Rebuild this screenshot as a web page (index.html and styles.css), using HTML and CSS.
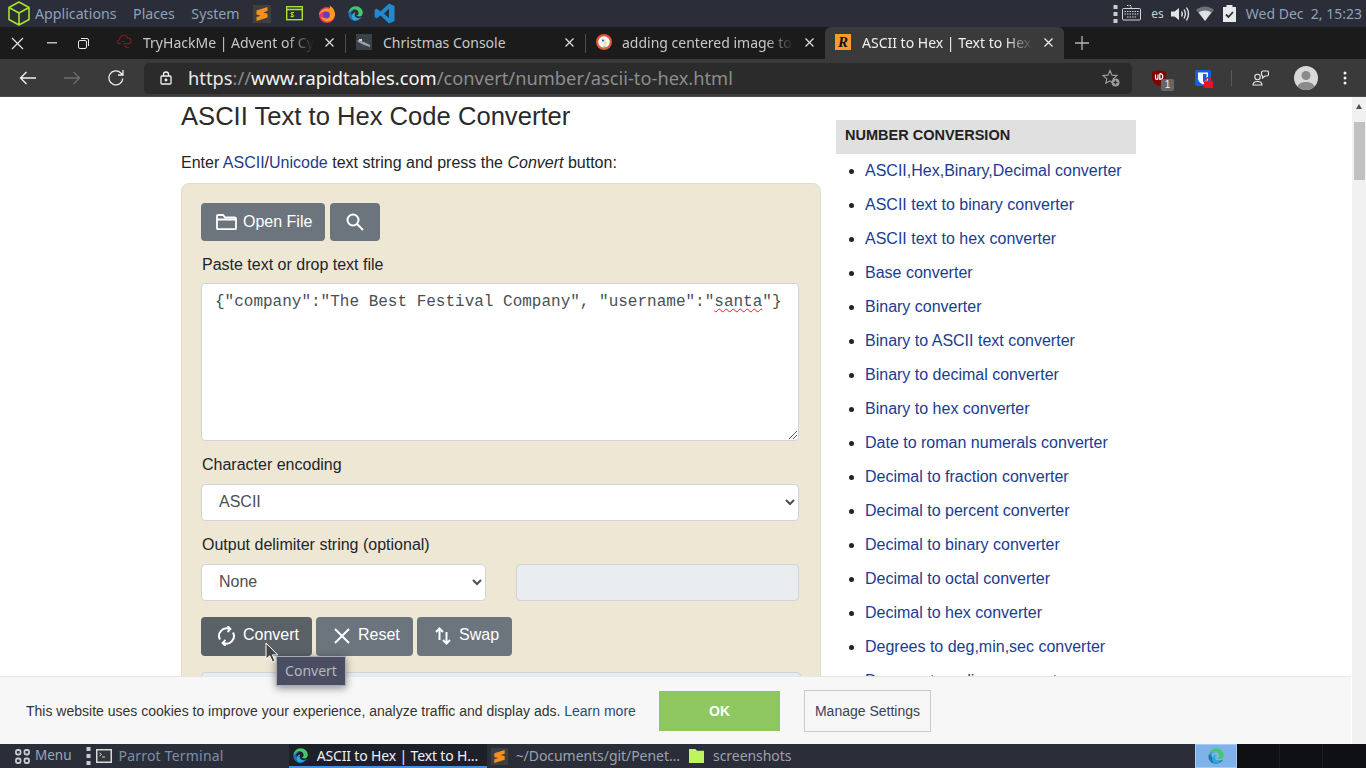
FILE: index.html
```html
<!DOCTYPE html>
<html lang="en">
<head>
<meta charset="utf-8">
<title>ASCII to Hex | Text to Hex Code Converter</title>
<link rel="stylesheet" href="styles.css">
</head>
<body>
<svg class="defs" width="0" height="0">
  <defs>
    <symbol id="edge" viewBox="0 0 24 24">
      <path fill="#1f6fb8" d="M21.5 16.500c-2.600 3.800-6 5.900-9.800 5.900C7.200 22.400 3.200 19 2 14.500c-.5-4 1.800-7.600 5-8.800C5.500 8 5.500 11 6.500 13.300c1.800 4 7 6.200 11.500 4.600 1.300-.4 2.400-.9 3.500-1.400z"/>
      <path fill="#27a9d8" d="M9.500 21.800C7 19.800 6 16.700 7.300 13.700c1-2.300 3-3.500 5-3.500-1 1-1.700 2.500-1.400 4.400.5 3 3.600 4.700 7.200 3.800-1.500 2.300-5.100 4.100-8.600 3.400z"/>
      <path fill="#43c96b" d="M2 12C2.400 6.200 6.700 1.800 12.300 1.800c5.700 0 10 4.300 10 9.500 0 2.800-2.100 4.800-5 4.800-1.800 0-3.300-.6-3.800-1.500 1.800-.2 2.900-1.400 2.900-3 0-3.100-2.800-5.500-6-5.500C6.800 6.600 3.500 8.600 2 12z"/>
      <path fill="#2aa4d6" d="M2 12c1.500-3.400 4.800-5.400 8.400-5.400 1.400 0 2.600.4 3.700 1.100C11 6.400 7.500 7.300 6.300 9.700 4.800 9.800 3.200 10.700 2 12z"/>
    </symbol>
    <symbol id="sublime" viewBox="0 0 18 18">
      <rect width="18" height="18" fill="#3f3f3f"/>
      <path fill="#f58f1e" d="M14.500 2v4L10.300 7.400 14.500 8.700v3.800L3.500 16v-4l4.200-1.300L3.500 9.500V5.500z"/>
    </symbol>
  </defs>
</svg>

<header class="topbar">
  <div class="menu-group">
    <svg class="cube" width="22" height="25" viewBox="0 0 22 25" fill="none" stroke="#a6e22e" stroke-width="1.600" stroke-linejoin="round"><path d="M11 1l10 5.500v12L11 24 1 18.500v-12zM1 6.500L11 12l10-5.500M11 12v12"/></svg>
    <span class="menu-item first">Applications</span>
    <span class="menu-item">Places</span>
    <span class="menu-item">System</span>
    <svg class="launcher l1" width="18" height="18"><use href="#sublime"/></svg>
    <svg class="launcher l2" width="17" height="15" viewBox="0 0 17 15" fill="none"><rect x=".7" y=".7" width="15.600" height="13" stroke="#a6e22e" stroke-width="1.400"/><path d="M1 3.500h15" stroke="#a6e22e" stroke-width="1.600"/><path d="M6 6v5.500M4.500 10.500h3q.6-1-.4-1.700l-1.800-.7q-.8-.8.200-1.600h2.500" stroke="#a6e22e"/></svg>
    <svg class="launcher l3" width="18" height="18" viewBox="0 0 18 18"><circle cx="9" cy="10" r="8" fill="#e6336b"/><path fill="#ff9a1f" d="M17 9.500C17 5 14.500 2 11.500.5c1.200 2 .6 3-.5 3.500C8 3 5 4 4 5.500 2 6 1.200 8 1 10c2-3 5-4 7-3.500 3 .8 3.500 3.500 2 5.500-1.500 1.500-5 1.500-7-.5 1 3.500 4 5 6.500 5 4 0 7.500-3.500 7.500-7.500z"/><circle cx="8.500" cy="10" r="3.400" fill="#6a3bc4"/></svg>
    <svg class="launcher l4" width="17" height="17"><use href="#edge"/></svg>
    <svg class="launcher l5" width="21" height="21" viewBox="0 0 21 21"><path fill="#1f8ad2" d="M15 .5l5.500 2.600v14.800L15 20.500 6.500 12.400 2.800 15.300.6 14.200V6.800l2.200-1.100 3.700 2.900zM15 5.700L10 10.500l5 4.800z"/></svg>
  </div>
  <div class="tray">
    <svg class="tray-dots" width="5" height="20" viewBox="0 0 5 20" fill="#c9ccd2"><rect width="4" height="4" x=".5" y="1"/><rect width="4" height="4" x=".5" y="8"/><rect width="4" height="4" x=".5" y="15"/></svg>
    <svg class="tray-kbd" width="19" height="18" viewBox="0 0 19 18" fill="none" stroke="#d3d5d9"><rect x=".5" y="5.500" width="18" height="11.500" rx="1"/><path d="M9 5V2.500H5M2.500 8.500h14M2.500 11h14M5 14h9" stroke-dasharray="1.500 1"/></svg>
    <span class="tray-lang">es</span>
    <svg class="tray-icon sound" width="20" height="16" viewBox="0 0 20 16" fill="none" stroke="#e3e4e7" stroke-width="1.400"><path fill="#e3e4e7" stroke="none" d="M0 5.500h3.500L8 2v12l-4.500-3.500H0z"/><path d="M10.500 5.500q1.500 2.500 0 5M13 3.500q2.700 4.500 0 9M15.500 1.500q4 6.500 0 13"/></svg>
    <svg class="tray-icon wifi" width="18" height="15" viewBox="0 0 18 15"><path fill="#6d7078" d="M0 4C5-.8 13-.8 18 4L9 15z"/><path fill="#dfe0e3" d="M2.700 6.500c3.700-2.800 9-2.800 12.600 0L9 15z"/></svg>
    <svg class="tray-icon clip" width="13" height="17" viewBox="0 0 13 17"><path fill="#e8e9eb" d="M0 2h3.500V0h6v2H13v17H0z"/><path fill="none" stroke="#2b2e38" stroke-width="1.800" d="M3 9.500l2.500 2.500L10 7"/></svg>
    <span class="clock">Wed Dec&nbsp; 2, 15:23</span>
  </div>
</header>

<nav class="tabstrip">
  <div class="winctl">
    <svg width="13" height="13" viewBox="0 0 13 13" stroke="#e6e6e6" stroke-width="1.200"><path d="M1 1l11 11M12 1L1 12"/></svg>
    <svg class="wc-min" width="10" height="2" viewBox="0 0 10 2"><rect width="10" height="1.500" fill="#bdbdbd"/></svg>
    <svg class="wc-max" width="11" height="11" viewBox="0 0 11 11" fill="none" stroke="#e6e6e6"><rect x=".5" y="2.500" width="8" height="8" rx="1.500"/><path d="M3 .5h6q1.500 0 1.500 1.500v6"/></svg>
  </div>
  <div class="tab tab-first">
    <svg class="fav" width="16" height="16" viewBox="0 0 17 17" fill="none" stroke="#8e1a1e" stroke-width="1.100"><path d="M4 10.500H2.500a2.300 2.300 0 0 1 0-4.500C3 3 5 1.500 7.500 1.500S11 3 11.500 4.500c1.500-.3 3.500.8 3.500 2.800s-1.300 3-3 3H6.500M8 13l3 1.500 2 0M5 8h3"/></svg>
    <span class="tab-title">TryHackMe | Advent of Cy</span>
    <svg class="tab-x" width="9" height="9" viewBox="0 0 9 9" stroke="#e0e0e0" stroke-width="1.200"><path d="M.5.500l8 8M8.500.500l-8 8"/></svg>
  </div>
  <div class="tab sep tab-wide-gap">
    <svg class="fav" width="16" height="16" viewBox="0 0 16 16"><rect width="16" height="16" fill="#3b4148"/><path d="M1 6l7 2 6 3v2L8 11 2 8z" fill="#9aa0a6"/><rect x="3" y="5" width="3" height="2" fill="#d0d0d0"/></svg>
    <span class="tab-title">Christmas Console</span>
    <svg class="tab-x" width="9" height="9" viewBox="0 0 9 9" stroke="#e0e0e0" stroke-width="1.200"><path d="M.5.500l8 8M8.500.500l-8 8"/></svg>
  </div>
  <div class="tab sep">
    <svg class="fav" width="16" height="16" viewBox="0 0 16 16"><circle cx="8" cy="8" r="8" fill="#de5833"/><circle cx="8" cy="8" r="5.800" fill="#fff"/><path d="M5 4q3-2 5 1 1 4 .5 8h-3Q5 9 5 4z" fill="#e9e9e9"/><circle cx="7" cy="6.500" r="1" fill="#2d4f8e"/><path d="M8 9l3-.8v1.600z" fill="#fdd20a"/><path d="M7.500 12.500l3 .2-1 1.800h-2z" fill="#65bc46"/></svg>
    <span class="tab-title">adding centered image to</span>
    <svg class="tab-x" width="9" height="9" viewBox="0 0 9 9" stroke="#e0e0e0" stroke-width="1.200"><path d="M.5.500l8 8M8.500.500l-8 8"/></svg>
  </div>
  <div class="tab active">
    <span class="fav r-fav">R</span>
    <span class="tab-title">ASCII to Hex | Text to Hex</span>
    <svg class="tab-x" width="9" height="9" viewBox="0 0 9 9" stroke="#f0f0f0" stroke-width="1.200"><path d="M.5.500l8 8M8.500.500l-8 8"/></svg>
  </div>
  <svg class="newtab" width="14" height="14" viewBox="0 0 14 14" stroke="#b5b5b5" stroke-width="1.300"><path d="M7 0v14M0 7h14"/></svg>
</nav>

<div class="toolbar">
  <div class="navbtns">
    <svg width="18" height="14" viewBox="0 0 18 14" fill="none" stroke="#f2f2f2" stroke-width="1.300"><path d="M17 7H1.500M7.500 1l-6 6 6 6"/></svg>
    <svg width="18" height="14" viewBox="0 0 18 14" fill="none" stroke="#6d6d6d" stroke-width="1.300"><path d="M1 7h15.500M10.500 1l6 6-6 6"/></svg>
    <svg width="18" height="18" viewBox="0 0 18 18" fill="none" stroke="#eeeeee" stroke-width="1.300"><path d="M15.800 9.500a7 7 0 1 1-2-5.500l2 2M16 1v5h-5"/></svg>
  </div>
  <div class="omnibox">
    <svg class="lock" width="12" height="14" viewBox="0 0 12 14" fill="none" stroke="#f2f2f2" stroke-width="1.300"><rect x="1" y="5" width="10" height="8" rx="1"/><path d="M3.500 5V3.500a2.500 2.500 0 0 1 5 0V5"/><circle cx="6" cy="9" r=".8" fill="#f2f2f2"/></svg>
    <span class="url"><span class="u-main">https</span><span class="u-dim">://</span><span class="u-host">www.rapidtables.com</span><span class="u-dim">/convert/number/ascii-to-hex.html</span></span>
    <svg class="star" width="18" height="18" viewBox="0 0 18 18" fill="none" stroke="#9b9b9b" stroke-width="1.200"><path d="M8 1.500l2 4.700 5 .4-3.800 3.300 1 4.300L8 12l-4.200 2.200 1-4.300L1 6.600l5-.4z"/><circle cx="13.500" cy="13.500" r="4" fill="#9b9b9b" stroke="none"/><path d="M13.500 11.500v4M11.500 13.500h4" stroke="#2b2b2b"/></svg>
  </div>
  <div class="ext">
    <span class="ubo">
      <svg width="14" height="16" viewBox="0 0 14 16"><path fill="#800000" d="M0 2l7-2 7 2v6q0 5-7 8-7-3-7-8z"/><path fill="none" stroke="#fff" stroke-width="1.200" d="M3.500 4.500v3.500q0 1.300 1.300 1.300T6 8V4.500M7.800 3.500v6q3-.2 3-3t-3-3"/></svg>
      <span class="ubo-badge">1</span>
    </span>
    <span class="bw">
      <svg width="16" height="16" viewBox="0 0 16 16"><rect width="16" height="16" rx="1.500" fill="#175ddc"/><path fill="#fff" d="M3 2.500h10v6q0 3.500-5 6-5-2.500-5-6z"/><path fill="#175ddc" d="M8 4v8.500q3.500-1.800 3.500-4.500V4z"/></svg>
      <svg class="bw-lock" width="9" height="11" viewBox="0 0 9 11"><path fill="none" stroke="#e8131d" stroke-width="1.300" d="M2 5V3a2.500 2.500 0 0 1 5 0v2"/><rect y="4.500" width="9" height="6.500" rx=".5" fill="#e8131d"/></svg>
    </span>
    <span class="vsep"></span>
    <svg class="people" width="17" height="16" viewBox="0 0 17 16" fill="none" stroke="#e8e8e8" stroke-width="1.100"><circle cx="5.500" cy="7" r="2.700"/><path d="M1 15c0-2.500 2-3.500 4.500-3.500S10 12.500 10 15z"/><path d="M9.500 2.500Q9.500 1 11 1h4q1.500 0 1.500 1.500v2Q16.500 6 15 6h-2l-2.500 2V5.800q-1-.2-1-1.500z"/></svg>
    <svg class="avatar" width="24" height="24" viewBox="0 0 24 24"><circle cx="12" cy="12" r="12" fill="#d9d9d9"/><circle cx="12" cy="9.500" r="4.500" fill="#8a8a8a"/><path d="M3.500 20.500c1.500-3.500 5-4.500 8.500-4.500s7 1 8.500 4.500A12 12 0 0 1 12 24a12 12 0 0 1-8.500-3.500z" fill="#8a8a8a"/></svg>
    <svg class="kebab" width="4" height="14" viewBox="0 0 4 14" fill="#f0f0f0"><circle cx="2" cy="2" r="1.500"/><circle cx="2" cy="7" r="1.500"/><circle cx="2" cy="12" r="1.500"/></svg>
  </div>
</div>

<div class="viewport">
  <main class="page">
    <section class="content">
      <h1 class="title">ASCII Text to Hex Code Converter</h1>
      <p class="intro">Enter <a href="#">ASCII</a>/<a href="#">Unicode</a> text string and press the <em>Convert</em> button:</p>
      <form class="card">
        <div class="btnrow top">
          <button type="button" class="btn">
            <svg class="ico" width="21" height="16" viewBox="0 0 21 16" fill="none" stroke="#fff" stroke-width="1.800"><path d="M1 14.200V2q0-1 1-1h5l2 2.300h9.500q1.500 0 1.500 1.200v9.700q0 1-1 1H2q-1 0-1-1zM1 5.500h19"/></svg>Open File
          </button>
          <button type="button" class="btn icon-only" aria-label="Search">
            <svg width="18" height="18" viewBox="0 0 18 18" fill="none" stroke="#fff" stroke-width="2"><circle cx="7" cy="7" r="5.500"/><path d="M11 11l6 6"/></svg>
          </button>
        </div>
        <label class="lbl first-lbl">Paste text or drop text file</label>
        <div class="ta-box">{"company":"The Best Festival Company", "username":"<span class="spell">santa</span>"}<svg class="grip" width="8" height="8" viewBox="0 0 8 8" stroke="#555"><path d="M0 8l8-8M4 8l4-4"/></svg></div>
        <label class="lbl">Character encoding</label>
        <select class="sel wide"><option>ASCII</option></select>
        <label class="lbl">Output delimiter string (optional)</label>
        <div class="delim">
          <select class="sel half"><option>None</option></select>
          <input class="disabled-input" type="text" disabled aria-label="Delimiter">
        </div>
        <div class="btnrow actions">
          <button type="button" class="btn hover convert">
            <svg class="ico" width="19" height="20" viewBox="0 0 19 20" fill="none" stroke="#fff" stroke-width="2"><path d="M3 13.500A7.500 7.500 0 0 1 12.500 3M16 6.500A7.500 7.500 0 0 1 6.500 17"/><path d="M10.500 0l3 3-3 3M8.500 20l-3-3 3-3" stroke-width="1.800"/></svg>Convert
            <span class="tooltip">Convert</span>
            <svg class="cursor" width="14" height="22" viewBox="0 0 14 22"><path d="M1 1v16l3.800-3.200 2.700 6.400 2.600-1.100-2.700-6.200 5.300 0z" fill="#454545" stroke="#fff"/></svg>
          </button>
          <button type="button" class="btn reset">
            <svg class="ico" width="16" height="16" viewBox="0 0 16 16" stroke="#fff" stroke-width="2"><path d="M1 1l14 14M15 1L1 15"/></svg>Reset
          </button>
          <button type="button" class="btn swap">
            <svg class="ico" width="16" height="18" viewBox="0 0 16 18" fill="none" stroke="#fff" stroke-width="2"><path d="M4.500 13V2M1 5l3.500-3.500L8 5M11.500 5v11.500M8 13l3.500 3.500L15 13"/></svg>Swap
          </button>
        </div>
        <div class="output"></div>
      </form>
    </section>
    <aside class="side">
      <h2 class="side-head">NUMBER CONVERSION</h2>
      <ul class="side-list">
        <li><a href="#">ASCII,Hex,Binary,Decimal converter</a></li>
        <li><a href="#">ASCII text to binary converter</a></li>
        <li><a href="#">ASCII text to hex converter</a></li>
        <li><a href="#">Base converter</a></li>
        <li><a href="#">Binary converter</a></li>
        <li><a href="#">Binary to ASCII text converter</a></li>
        <li><a href="#">Binary to decimal converter</a></li>
        <li><a href="#">Binary to hex converter</a></li>
        <li><a href="#">Date to roman numerals converter</a></li>
        <li><a href="#">Decimal to fraction converter</a></li>
        <li><a href="#">Decimal to percent converter</a></li>
        <li><a href="#">Decimal to binary converter</a></li>
        <li><a href="#">Decimal to octal converter</a></li>
        <li><a href="#">Decimal to hex converter</a></li>
        <li><a href="#">Degrees to deg,min,sec converter</a></li>
        <li><a href="#">Degrees to radians converter</a></li>
      </ul>
    </aside>
  </main>
  <div class="scrollbar">
    <span class="sb-up"></span>
    <span class="sb-thumb"></span>
  </div>
  <div class="cookie">
    <p class="cookie-text">This website uses cookies to improve your experience, analyze traffic and display ads. <a href="#">Learn more</a></p>
    <button type="button" class="ok">OK</button>
    <button type="button" class="manage">Manage Settings</button>
  </div>
</div>

<footer class="taskbar">
  <span class="task menu-btn">
    <svg width="15" height="15" viewBox="0 0 15 15" fill="none" stroke="#c9ccd2" stroke-width="1.800"><rect x="1" y="1" width="4.500" height="4.500" rx="1.500"/><rect x="9.500" y="1" width="4.500" height="4.500" rx="1.500"/><rect x="1" y="9.500" width="4.500" height="4.500" rx="1.500"/><rect x="9.500" y="9.500" width="4.500" height="4.500" rx="1.500"/></svg>
    <span class="menu-label">Menu</span>
  </span>
  <svg class="task-dots" width="5" height="20" viewBox="0 0 5 20" fill="#c9ccd2"><rect width="4" height="4" x=".5" y="1"/><rect width="4" height="4" x=".5" y="8"/><rect width="4" height="4" x=".5" y="15"/></svg>
  <span class="task term">
    <svg width="16" height="14" viewBox="0 0 16 14"><rect width="16" height="14" fill="#d8d8d8"/><rect x="1.500" y="1.500" width="13" height="11" fill="#33363c"/><path d="M3.500 4l2 1.500-2 1.500M6 8h3" stroke="#d8d8d8" fill="none"/></svg>
    <span class="dim-label wide-label">Parrot Terminal</span>
  </span>
  <span class="task current">
    <svg width="17" height="17"><use href="#edge"/></svg>
    <span class="current-label">ASCII to Hex | Text to H...</span>
  </span>
  <span class="task subl">
    <svg width="17" height="17"><use href="#sublime"/></svg>
    <span class="dim-label narrow">~/Documents/git/Penet...</span>
  </span>
  <span class="task shots">
    <svg width="15" height="14" viewBox="0 0 14 13"><path fill="#bdf45f" d="M0 0h6l1.500 1.500H14V13H0z"/></svg>
    <span class="dim-label narrow">screenshots</span>
  </span>
  <span class="pager">
    <span class="pager-on"><svg width="18" height="18"><use href="#edge"/></svg></span>
    <span class="pager-off"></span>
    <span class="pager-off"></span>
    <span class="pager-off last"></span>
  </span>
</footer>
</body>
</html>
```
FILE: styles.css
```css
* { box-sizing: border-box; }
html, body { margin: 0; padding: 0; height: 768px; overflow: hidden; }
body { display: flex; flex-direction: column; width: 1366px; font-family: "Liberation Sans", Arial, sans-serif; background: #fff; }
.defs { position: absolute; }

/* desktop top panel */
.topbar { height: 27px; flex: none; display: flex; justify-content: space-between; align-items: center; background: #2b2e38; font: 14.200px "Noto Sans", sans-serif; color: #8ea2ba; }
.menu-group { display: flex; align-items: center; }
.cube { margin-left: 8px; }
.menu-item { margin-left: 16.500px; white-space: nowrap; }
.menu-item.first { margin-left: 5px; }
.launcher { flex: none; }
.l1 { margin-left: 13px; }
.l2 { margin-left: 15px; }
.l3 { margin-left: 15px; }
.l4 { margin-left: 11px; }
.l5 { margin-left: 10px; }
.tray { display: flex; align-items: center; padding-right: 4px; }
.tray-kbd { margin-left: 4px; margin-top: -3px; }
.tray-lang { margin-left: 10px; color: #c9ccd2; font-size: 12px; }
.sound { margin-left: 7px; }
.wifi { margin-left: 5px; }
.clip { margin-left: 9px; }
.clock { margin-left: 10px; white-space: nowrap; font-size: 14px; }

/* browser tab strip */
.tabstrip { height: 32px; flex: none; display: flex; align-items: center; background: #1b1b1b; font: 14px "Noto Sans", sans-serif; color: #c8c8c8; }
.winctl { width: 105px; flex: none; display: flex; align-items: center; padding-left: 11px; }
.wc-min { margin-left: 23px; }
.wc-max { margin-left: 21px; }
.tab { position: relative; width: 240px; height: 32px; flex: none; display: flex; align-items: center; padding: 0 11px 2px 11px; }
.tab-first { padding-left: 12px; }
.tab.sep::before { content: ""; position: absolute; left: 0; top: 7px; height: 19px; width: 1px; background: #4f4f4f; }
.tab.active { background: #3a3a3a; color: #f0f0f0; border-radius: 6px 6px 0 0; width: 239px; padding-left: 10px; }
.fav { flex: none; }
.r-fav { width: 16px; height: 16px; background: #f89b2c; color: #111; font: italic bold 15px/16px "Liberation Serif", serif; text-align: center; }
.tab-title { flex: 1; min-width: 0; margin: 0 11px 0 10px; overflow: hidden; white-space: nowrap; -webkit-mask-image: linear-gradient(to right, #000 84%, transparent 100%); mask-image: linear-gradient(to right, #000 84%, transparent 100%); }
.tab-wide-gap .tab-title, .active .tab-title { margin-left: 11px; -webkit-mask-image: none; mask-image: none; }
.active .tab-title { -webkit-mask-image: linear-gradient(to right, #000 84%, transparent 100%); mask-image: linear-gradient(to right, #000 84%, transparent 100%); }
.tab-x { flex: none; }
.newtab { margin-left: 11px; }

/* browser toolbar */
.toolbar { height: 38px; flex: none; display: flex; align-items: center; background: #3a3a3a; border-bottom: 1px solid #4b4b4b; }
.navbtns { width: 144px; flex: none; display: flex; align-items: center; gap: 26px; padding-left: 19px; }
.omnibox { width: 988px; height: 31px; margin-top: 1px; flex: none; display: flex; align-items: center; background: #2b2b2b; border-radius: 5px; padding: 0 12px 0 16px; }
.lock { flex: none; }
.url { margin-left: 16px; margin-top: -2px; flex: 1; font: 18.300px "Noto Sans", sans-serif; white-space: nowrap; }
.u-main { color: #e8e8e8; }
.u-dim { color: #8d8d8d; }
.u-host { color: #f5f5f5; }
.star { flex: none; }
.ext { flex: 1; display: flex; align-items: center; }
.ubo { position: relative; display: flex; margin-left: 20px; }
.ubo-badge { position: absolute; left: 9px; top: 9px; width: 13px; height: 12px; border-radius: 2px; background: #666; color: #eee; font: 10px/12px "Liberation Sans", sans-serif; text-align: center; }
.bw { position: relative; display: flex; margin-left: 29px; }
.bw-lock { position: absolute; left: 9px; top: 7px; }
.vsep { width: 1px; height: 16px; background: #5a5a5a; margin-left: 20px; }
.people { margin-left: 20px; }
.avatar { margin-left: 25px; }
.kebab { margin-left: 25px; }

/* page */
.viewport { position: relative; flex: 1; min-height: 0; display: flex; overflow: hidden; background: #fff; }
.page { width: 1352px; flex: none; height: 100%; overflow: hidden; display: flex; gap: 15px; padding-left: 181px; align-items: flex-start; }
.content { width: 640px; flex: none; color: #212529; }
.title { margin: 3px 0 0; font-size: 25.600px; font-weight: 400; line-height: 32px; color: #2a2a2a; }
.intro { margin: 19px 0 0; font-size: 16px; line-height: 24px; }
a { color: #1a3c8f; text-decoration: none; }
.card { margin-top: 8px; padding: 19px 19px 40px; background: #eee7d4; border: 1px solid #e0dccf; border-radius: 8px; height: 700px; }
.btnrow { display: flex; }
.btn { position: relative; height: 38px; display: flex; align-items: center; border: 0; padding: 0 13px 1px 15px; background: #6c757d; color: #fff; font: 16px "Liberation Sans", sans-serif; border-radius: 4px; white-space: nowrap; }
.ico { flex: none; margin-right: 6px; }
.top { gap: 5px; }
.icon-only { width: 50px; justify-content: center; padding: 0; }
.lbl { display: block; margin-top: 12px; padding-left: 1px; font-size: 16px; line-height: 24px; color: #212529; }
.first-lbl { margin-top: 12px; }
.ta-box { position: relative; width: 598px; height: 158px; margin-top: 6px; padding: 6px 13px; background: #fff; border: 1px solid #ced4da; border-radius: 4px; font: 16px/24px "Liberation Mono", monospace; color: #495057; white-space: pre; }
.spell { text-decoration: underline wavy #e02020 1.200px; text-underline-offset: 2px; }
.grip { position: absolute; right: 1px; bottom: 1px; }
.sel { height: 37px; padding: 5px 13px 7px; background: #fff; border: 1px solid #ced4da; border-radius: 4px; font: 16px "Liberation Sans", sans-serif; color: #495057; display: block; }
.wide { width: 598px; margin-top: 7px; }
.half { width: 285px; }
.delim { display: flex; gap: 30px; margin-top: 7px; }
.disabled-input { width: 283px; height: 37px; background: #e9ecef; border: 1px solid #ced4da; border-radius: 4px; }
.actions { margin-top: 16px; gap: 4px; }
.convert { width: 111px; height: 39px; background: #5a6268; padding: 0 0 3px 16px; }
.convert .ico { margin-right: 7px; margin-top: 2px; }
.reset { width: 97px; height: 39px; padding: 0 0 3px 18px; }
.reset .ico { margin: 2px 8px 0 0; }
.swap { width: 95px; height: 39px; padding: 0 0 3px 18px; }
.swap .ico { margin: 2px 8px 0 0; }
.output { height: 100px; margin-top: 16px; background: #e9ecef; border: 1px solid #ced4da; border-radius: 4px; }
.tooltip { position: absolute; left: 75px; top: 39px; width: 70px; height: 30px; padding-bottom: 2px; display: flex; align-items: center; justify-content: center; background: #4a4e63; border: 1px solid #a9adba; color: #b4b8c4; font: 14px "Noto Sans", sans-serif; box-shadow: 0 2px 8px rgba(0,0,0,.45); z-index: 2; }
.cursor { position: absolute; left: 64px; top: 25px; z-index: 3; }

/* sidebar */
.side { width: 300px; flex: none; margin-top: 23px; }
.side-head { margin: 0; height: 34px; padding-left: 9px; background: #e0e0e0; font-size: 14.500px; font-weight: 700; line-height: 30px; color: #222; }
.side-list { margin: 0; padding: 0 0 0 29px; list-style: disc; font-size: 16px; line-height: 24px; color: #222; }
.side-list li { margin-top: 10px; }
.side-list li:first-child { margin-top: 5px; }

/* page scrollbar */
.scrollbar { position: relative; flex: 1; background: #f1f1f1; }
.sb-up { position: absolute; left: 4px; top: 7px; border: 3.500px solid transparent; border-top: 0; border-bottom: 5px solid #505050; }
.sb-thumb { position: absolute; left: 2px; right: 1px; top: 25px; height: 58px; background: #c1c1c1; }

/* cookie banner */
.cookie { position: absolute; left: 0; bottom: 0; width: 1351px; height: 68px; display: flex; align-items: center; padding: 1px 0 0 26px; background: #f7f7f7; border-top: 1px solid #e6e6e6; }
.cookie-text { margin: 0; width: 633px; flex: none; font-size: 14px; color: #333; white-space: nowrap; }
.cookie-text a { color: #2d4a7a; }
.ok { width: 121px; height: 40px; border: 0; background: #8ec760; color: #fff; font: bold 14px "Liberation Sans", sans-serif; }
.manage { width: 127px; height: 42px; margin-left: 24px; background: #f7f7f7; border: 1px solid #c9c9c9; color: #3b4252; font: 14px "Liberation Sans", sans-serif; }

/* bottom panel */
.taskbar { height: 24px; flex: none; display: flex; align-items: center; background: #2b2e38; font: 14px "Noto Sans", sans-serif; color: #c9ccd2; }
.task { display: flex; align-items: center; height: 24px; white-space: nowrap; }
.menu-btn { margin-left: 15px; gap: 5px; }
.menu-label { color: #9aa6b6; font-size: 13.500px; margin-top: -2px; }
.task-dots { margin-left: 14px; }
.term { margin-left: 5px; gap: 7px; }
.dim-label { color: #7d8ea3; letter-spacing: -.05px; margin-top: -2px; }
.wide-label { letter-spacing: .2px; }
.narrow { color: #9aa2ad; }
.current { margin-left: 65px; width: 198px; padding-left: 3px; gap: 8px; background: #1e2029; color: #eef0f3; border-bottom: 2px solid #4a90d9; }
.current-label { letter-spacing: -.15px; }
.subl { margin-left: 4px; gap: 8px; }
.shots { margin-left: 9px; gap: 9px; }
.pager { margin-left: auto; display: flex; height: 24px; }
.pager-on { width: 42px; display: flex; align-items: center; justify-content: center; background: #7fb2e8; border: 1px solid #a9cdf2; }
.pager-off { width: 43px; background: #0e1013; border-right: 1px solid #1b1d22; }
.pager-off.last { border-right: 0; }
```
